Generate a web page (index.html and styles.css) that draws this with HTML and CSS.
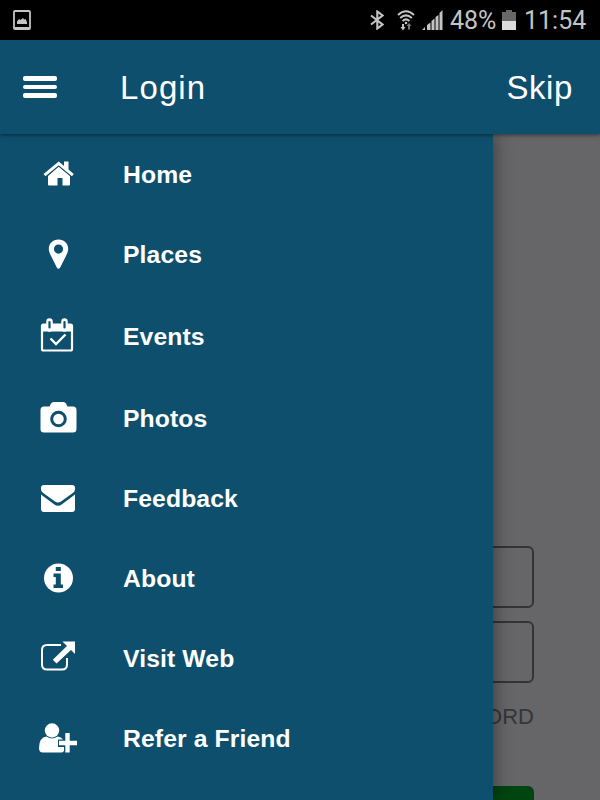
FILE: index.html
```html
<!DOCTYPE html>
<html lang="en">
<head>
  <meta charset="UTF-8">
  <title>Login</title>
  <meta name="viewport" content="width=device-width, initial-scale=1.0">
  <link rel="stylesheet" href="styles.css">
</head>
<body>
  <!-- STATUS BAR -->
  <div class="statusbar">
    <svg class="shot" width="18" height="20" viewBox="0 0 18 20">
      <rect x="1" y="1" width="16" height="18" rx="1" fill="none" stroke="#c4c4c4" stroke-width="1.800"/>
      <path d="M4 14v-2.500l2-2.500 1.500 1 2.500-2 1 1.500 1.500-.5 1.500 3v2zM2 17h14v2H2z" fill="#c4c4c4"/>
    </svg>
    <div class="status-right">
      <svg class="bluetooth" width="14" height="20" viewBox="0 0 14 20">
        <path d="M1 5.500L12.500 14.500L7.300 18.500V1.500L12.500 5.500L1 14.500" fill="none" stroke="#c4c4c4" stroke-width="2.100"/>
      </svg>
      <svg class="wifi" width="18" height="21" viewBox="0 0 18 21">
        <g fill="none" stroke="#c4c4c4" stroke-width="2">
          <path d="M1 5q8-7.500 16 0"/>
          <path d="M3.200 8q5.800-5.300 11.600 0"/>
          <path d="M5.600 11q3.400-3.200 6.800 0"/>
        </g>
        <circle cx="9" cy="13" r="1.300" fill="#c4c4c4"/>
        <path d="M5 14h2v3h1.500L6 20.500 3.500 17H5z" fill="#c4c4c4"/>
        <path d="M11 19.500v-3.500H9.500L12 13l2.500 3H13v3.500z" fill="#777"/>
      </svg>
      <svg class="signal" width="21" height="20" viewBox="0 0 21 20">
        <path d="M0 20l3-3v3zM5 20v-5l3.500-2.500V20zM9.500 20v-9l3-2.500V20zM13.500 20V7L16.500 5v15zM17.500 20V3L20.500 0v20z" fill="#c4c4c4"/>
      </svg>
      <span class="percent">48%</span>
      <svg class="battery" width="14" height="20" viewBox="0 0 14 20">
        <path d="M0 2h4V0h6v2h4v9H0z" fill="#686868"/>
        <path d="M0 11h14v9H0z" fill="#dcdcdc"/>
      </svg>
      <span class="clock">11:54</span>
    </div>
  </div>

  <!-- HEADER -->
  <div class="header">
    <div class="menu-btn"><span></span><span></span><span></span></div>
    <h1>Login</h1>
    <a class="skip">Skip</a>
  </div>

  <div class="content">
    <!-- LOGIN FORM -->
    <div class="login">
      <div class="field"></div>
      <div class="field"></div>
      <div class="forgot">FORGOT PASSWORD</div>
      <div class="login-btn"></div>
    </div>

    <!-- DRAWER -->
    <div class="drawer">
      <div class="item">
        <svg class="icon" viewBox="0 0 40 40">
          <path d="M20.700 12.500L32 22v8.500q0 1-1 1h-6.500V24h-5v7.500H11q-1 0-1-1V22z"/>
          <path d="M26 7.500h4.500v10L26 13.500z"/>
          <path d="M8 22.300L20.700 11.800l12.700 10.500" fill="none" stroke="#0d4f6c" stroke-width="1.200"/>
          <path d="M6.500 21.200L20.700 9.300l14.200 11.900" fill="none" stroke="#fff" stroke-width="2.900"/>
        </svg>
        <span>Home</span>
      </div>
      <div class="item">
        <svg class="icon" viewBox="0 0 40 40">
          <path fill-rule="evenodd" d="M20.500 5.500c5.600 0 9.700 4 9.700 9.300 0 2.400-.7 4.300-2 6.800l-6 12q-1.700 2.400-3.400 0l-6-12c-1.200-2.500-2-4.400-2-6.800 0-5.300 4.100-9.300 9.700-9.300zm0 5a4.600 4.600 0 1 0 0 9.200 4.600 4.600 0 0 0 0-9.200z"/>
        </svg>
        <span>Places</span>
      </div>
      <div class="item item-events">
        <svg class="icon" viewBox="0 0 40 40">
          <rect x="4" y="8.500" width="30" height="26" rx="1.500" fill="none" stroke="#fff" stroke-width="2.200"/>
          <path d="M4 8h30v7.500H4z"/>
          <path d="M11.500 5.500v7M26.500 5.500v7" fill="none" stroke="#fff" stroke-width="6.500" stroke-linecap="round"/>
          <path d="M11.500 6v5.500M26.500 6v5.500" fill="none" stroke="#0d4f6c" stroke-width="2.200" stroke-linecap="round"/>
          <path d="M12.500 22.500l5.500 5.500 9.500-9.500" fill="none" stroke="#fff" stroke-width="2.400"/>
        </svg>
        <span>Events</span>
      </div>
      <div class="item">
        <svg class="icon" viewBox="0 0 40 40">
          <path d="M6 8.500h5.500l1.500-3q.8-1.500 2.500-1.500h10q1.700 0 2.500 1.500l1.500 3H35q3.500 0 3.500 3.500v19q0 3.500-3.500 3.500H6q-3.500 0-3.500-3.500V12q0-3.500 3.500-3.500z"/>
          <circle cx="20.500" cy="21" r="6.800" fill="none" stroke="#0d4f6c" stroke-width="3"/>
        </svg>
        <span>Photos</span>
      </div>
      <div class="item">
        <svg class="icon" viewBox="0 0 40 40">
          <path d="M6 7h28q3 0 3 3v1.500q0 2-2.200 3.600L23 23.500q-3 2.200-6 0L5.200 15Q3 13.400 3 11.500V10q0-3 3-3z"/>
          <path d="M3 16.500l13 9.700q4 3 8 0l13-9.700V31q0 3-3 3H6q-3 0-3-3z"/>
        </svg>
        <span>Feedback</span>
      </div>
      <div class="item">
        <svg class="icon" viewBox="0 0 40 40">
          <circle cx="20.500" cy="20" r="14.500"/>
          <path d="M17.800 9h5v4h-5zM15.500 15.500h7.300v11H25V30h-9.500v-3.500h2.300V19h-2.300z" fill="#0d4f6c"/>
        </svg>
        <span>About</span>
      </div>
      <div class="item">
        <svg class="icon" viewBox="0 0 40 40">
          <path d="M23 7H9Q4 7 4 12v14.500q0 5 5 5h15q5 0 5-5V20" fill="none" stroke="#fff" stroke-width="2"/>
          <path d="M24.500 3.500H37V16l-4-4-14.500 13.500-3.700-3.700L29 8z"/>
        </svg>
        <span>Visit Web</span>
      </div>
      <div class="item">
        <svg class="icon" viewBox="0 0 40 40">
          <path d="M8.500 18.500q5.500 4 11 0 4 .5 5.500 3h-5v7.500h6v4q-1 1.500-3 1.500H5q-4 0-4-4.500Q1 19.500 8.500 18.500z"/>
          <circle cx="14" cy="12.500" r="7.200"/>
          <path d="M29.500 14.500v20.500" fill="none" stroke="#0d4f6c" stroke-width="6"/>
          <path d="M29.500 15v19.500M21 25h18" fill="none" stroke="#fff" stroke-width="4.400"/>
        </svg>
        <span>Refer a Friend</span>
      </div>
    </div>
  </div>
</body>
</html>
```
FILE: styles.css
```css
* {
  margin: 0;
  padding: 0;
  box-sizing: border-box;
}

body {
  font-family: "Liberation Sans", Arial, sans-serif;
  width: 600px;
  height: 800px;
  overflow: hidden;
  display: flex;
  flex-direction: column;
  background: #666668;
}

svg {
  display: block;
  flex: none;
}

/* STATUS BAR */
.statusbar {
  height: 40px;
  background: #000;
  display: flex;
  justify-content: space-between;
  align-items: center;
  padding: 0 14px 0 13px;
  color: #c4c4c4;
  font-family: Roboto, sans-serif;
  font-size: 25px;
}

.status-right {
  display: flex;
  align-items: center;
}

.wifi {
  margin-left: 13px;
}

.signal {
  margin-left: 7px;
}

.percent {
  width: 46px;
  margin-left: 7px;
  letter-spacing: -0.1px;
}

.battery {
  margin-left: 6px;
}

.clock {
  width: 62px;
  margin-left: 8px;
}

/* HEADER */
.header {
  height: 94px;
  background: #0d4f6c;
  display: flex;
  align-items: center;
  padding: 0 27px 0 23px;
  color: #fff;
  position: relative;
  z-index: 3;
  box-shadow: 0 1px 4px rgba(0, 0, 0, 0.5);
}

.menu-btn {
  width: 34px;
  display: flex;
  flex-direction: column;
  gap: 4px;
}

.menu-btn span {
  height: 4.500px;
  border-radius: 2px;
  background: #fff;
}

.header h1,
.skip {
  padding-top: 1px;
  font-size: 33px;
  font-weight: normal;
}

.header h1 {
  margin-left: 63px;
  letter-spacing: 1.1px;
}

.skip {
  margin-left: auto;
  letter-spacing: 0.6px;
}

/* LOGIN FORM */
.content {
  flex: 1;
  position: relative;
}

.login {
  height: 666px;
  padding: 412px 66px 0;
  display: flex;
  flex-direction: column;
  overflow: hidden;
}

.field {
  height: 62px;
  flex: none;
  margin-bottom: 13px;
  border: 2px solid #343438;
  border-radius: 6px;
}

.forgot {
  height: 40px;
  line-height: 42px;
  text-align: right;
  font-size: 22px;
  color: #353538;
}

.login-btn {
  height: 60px;
  flex: none;
  margin-top: 50px;
  border-radius: 6px;
  background: #004510;
}

/* DRAWER */
.drawer {
  position: absolute;
  top: 0;
  left: 0;
  z-index: 2;
  width: 493px;
  height: 666px;
  background: #0d4f6c;
  box-shadow: 2px 0 16px rgba(0, 0, 0, 0.4);
}

.item {
  height: 80px;
  display: flex;
  align-items: center;
  padding-left: 38px;
  gap: 45px;
  color: #fff;
  font-size: 23px;
  font-weight: bold;
}

.item span {
  padding-top: 2px;
  letter-spacing: 0.1px;
  transform: scaleX(1.075);
  transform-origin: left;
}

.item-events {
  height: 84px;
}

.icon {
  width: 40px;
  height: 40px;
  fill: #fff;
}
```
